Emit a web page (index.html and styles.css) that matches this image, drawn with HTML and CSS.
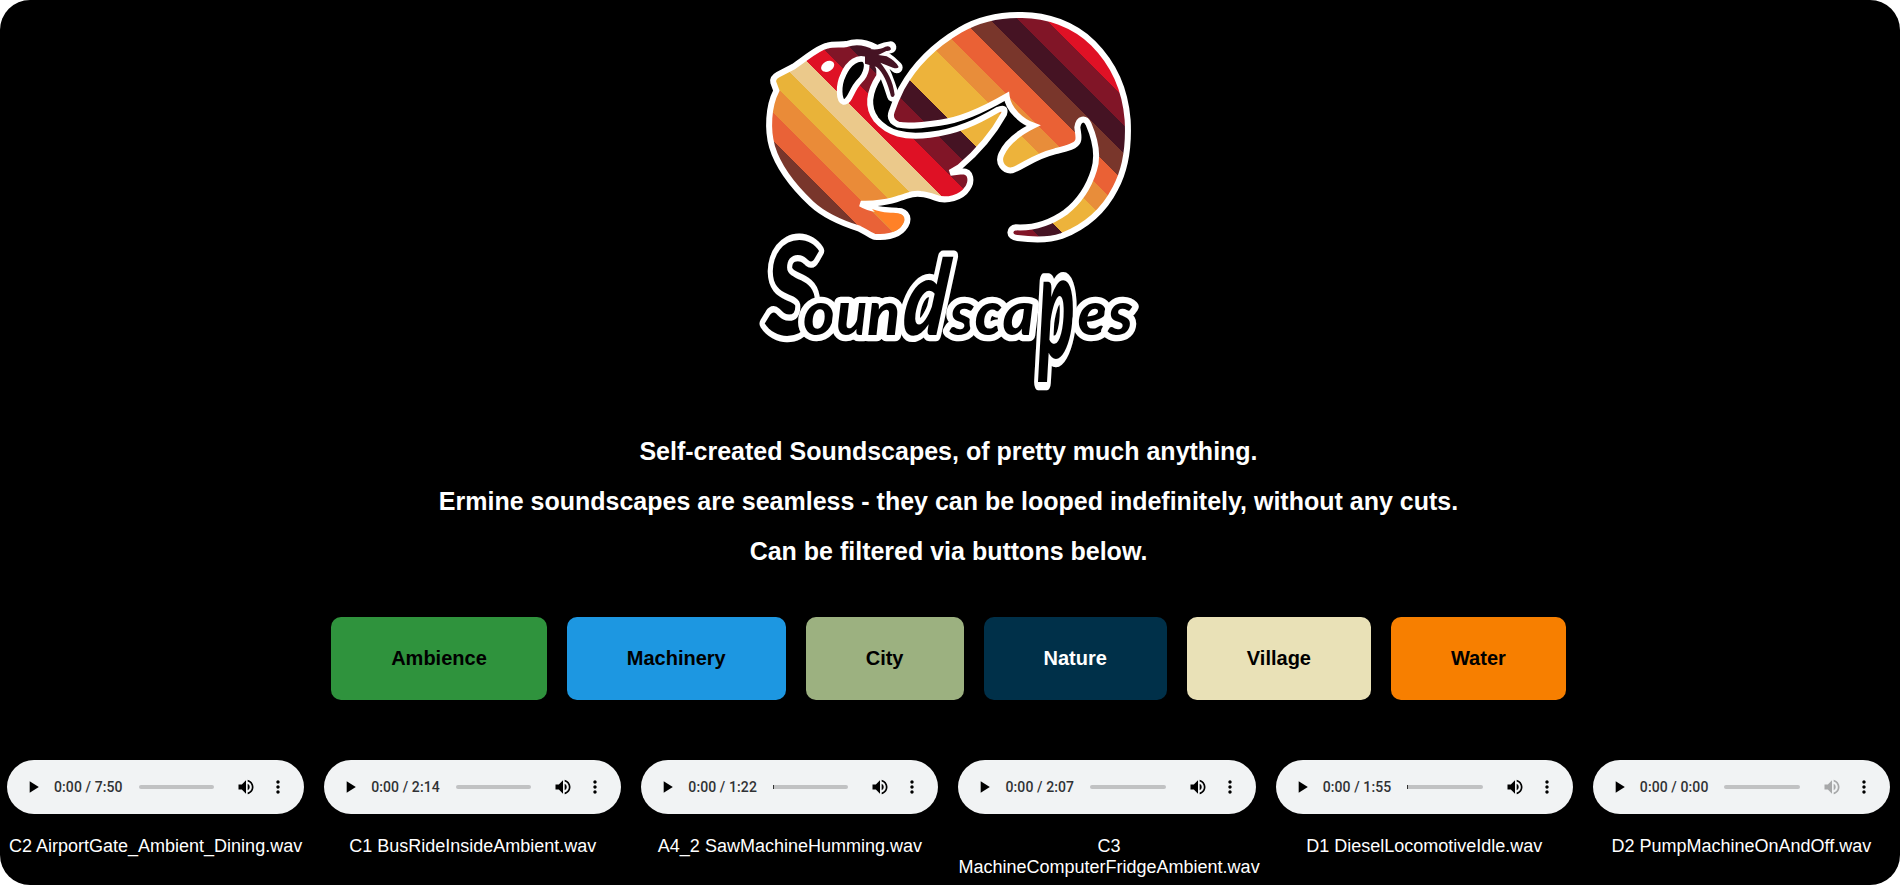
FILE: index.html
```html
<!DOCTYPE html>
<html lang="en">
<head>
<meta charset="utf-8">
<title>Ermine Soundscapes</title>
<link rel="stylesheet" href="styles.css">
</head>
<body>
<svg class="sprite" width="0" height="0" aria-hidden="true">
  <symbol id="play" viewBox="0 0 24 24"><path d="M8 5v14l11-7z"/></symbol>
  <symbol id="volume" viewBox="0 0 24 24"><path d="M3 9v6h4l5 5V4L7 9H3zm13.5 3A4.5 4.5 0 0 0 14 7.97v8.05A4.5 4.5 0 0 0 16.500 12zM14 3.230v2.060c2.890.860 5 3.540 5 6.710s-2.110 5.850-5 6.710v2.060c4.010-.91 7-4.490 7-8.770s-2.990-7.860-7-8.770z"/></symbol>
  <symbol id="more" viewBox="0 0 24 24"><path d="M12 8c1.100 0 2-.9 2-2s-.9-2-2-2-2 .9-2 2 .9 2 2 2zm0 2c-1.100 0-2 .9-2 2s.9 2 2 2 2-.9 2-2-.9-2-2-2zm0 6c-1.100 0-2 .9-2 2s.9 2 2 2 2-.9 2-2-.9-2-2-2z"/></symbol>
</svg>
<main class="page">
  <svg class="logo" viewBox="0 0 1200 1200" role="img" aria-label="Soundscapes ermine logo">
    <defs>
      <linearGradient id="stripes" gradientUnits="userSpaceOnUse" x1="-220" y1="220" x2="450" y2="-450">
        <stop offset=".0642" stop-color="#79362b"/><stop offset=".0642" stop-color="#e96237"/>
        <stop offset=".1284" stop-color="#e96237"/><stop offset=".1284" stop-color="#ea8b38"/>
        <stop offset=".1925" stop-color="#ea8b38"/><stop offset=".1925" stop-color="#e9b339"/>
        <stop offset=".256" stop-color="#e9b339"/><stop offset=".256" stop-color="#ebc98b"/>
        <stop offset=".3194" stop-color="#ebc98b"/><stop offset=".3194" stop-color="#df1125"/>
        <stop offset=".3821" stop-color="#df1125"/><stop offset=".3821" stop-color="#811527"/>
        <stop offset=".4463" stop-color="#811527"/><stop offset=".4463" stop-color="#451323"/>
        <stop offset=".5055" stop-color="#451323"/><stop offset=".5055" stop-color="#edb33b"/>
        <stop offset=".6321" stop-color="#edb33b"/><stop offset=".6321" stop-color="#e88d3a"/>
        <stop offset=".6918" stop-color="#e88d3a"/><stop offset=".6918" stop-color="#ea6135"/>
        <stop offset=".759" stop-color="#ea6135"/><stop offset=".759" stop-color="#79362b"/>
        <stop offset=".8231" stop-color="#79362b"/><stop offset=".8231" stop-color="#451323"/>
        <stop offset=".8843" stop-color="#451323"/><stop offset=".8843" stop-color="#811527"/>
        <stop offset=".9463" stop-color="#811527"/><stop offset=".9463" stop-color="#df1125"/>
      </linearGradient>
    </defs>
    <g class="outline">
      <path fill="url(#stripes)" d="M79 272L70 248Q66 234 84 224L130 200C166 176 202 143 232 137C252 131 274 136 290 132Q330 118 378 142L388 170V228C350 286 356 328 378 358C414 400 464 414 540 404C620 396 684 364 742 330Q770 318 762 342C730 400 680 458 629 501L601 518L636 514C665 514 667 545 652 566C636 592 590 606 556 593Q530 583 512 582C490 578 480 585 450 594C420 606 370 613 332 611C372 635 420 630 442 632C474 633 482 660 460 686C440 710 400 713 372 710C355 704 345 693 328 686C270 668 222 646 184 611C130 560 84 500 66 440C52 390 54 320 79 272Z"/>
      <path fill="url(#stripes)" d="M425 335C432 314 440 294 454 266C490 200 550 137 630 90C680 61 740 45 805 45C890 42 975 75 1030 130C1090 190 1126 270 1133 360C1137 435 1126 510 1096 565C1058 640 1002 682 935 708C895 722 840 719 802 714C774 711 776 684 798 682C855 685 905 666 946 637C990 603 1018 556 1032 510C1048 460 1032 410 1016 373C1006 352 986 354 982 382C984 400 988 413 984 423C978 440 948 446 915 454C850 470 820 500 786 511C762 514 742 490 754 463C770 425 810 397 850 377C815 364 775 330 770 289C720 318 635 360 570 368C520 375 475 381 445 374Q415 361 425 335Z"/>
    </g>
    <path fill="#ff8127" d="M366 627C405 642 426 636 444 640C468 644 466 668 450 684L430 695Z"/>
    <path class="ear" d="M281 306C266 302 264 256 280 224C298 183 325 173 342 178C357 188 350 223 329 243C302 270 302 305 281 306Z"/>
    <ellipse class="eye" cx="233" cy="199" rx="21" ry="15" transform="rotate(-30 233 199)"/>
    <path class="tuft-edge" d="M374 160Q390 146 421 142M374 162Q405 166 440 202M389 188Q408 220 429 287"/>
    <path fill="#451323" d="M345 144C370 151 390 149 406 140Q421 136 423 148Q420 154 409 153L385 165L410 169Q438 184 446 201Q442 208 429 203L391 188C412 214 429 242 434 284Q431 294 423 289C414 250 399 217 380 201L345 191Z"/>
    <g class="wordmark">
      <text class="cap" transform="translate(46 1004) scale(.8 1)">S</text>
      <text y="1004" x="160 259 352">oun</text>
      <text class="tall" transform="translate(452 1004) skewX(-7) scale(.75 1)">d</text>
      <text y="1004" x="600 674 758">sca</text>
      <text class="deep" transform="translate(865 1075) scale(.46 1)">p</text>
      <text y="1004" x="983 1075">es</text>
    </g>
  </svg>
  <header class="intro">
    <h2>Self-created Soundscapes, of pretty much anything.</h2>
    <h2>Ermine soundscapes are seamless - they can be looped indefinitely, without any cuts.</h2>
    <h2>Can be filtered via buttons below.</h2>
  </header>
  <nav class="filters">
    <button class="filter ambience">Ambience</button>
    <button class="filter machinery">Machinery</button>
    <button class="filter city">City</button>
    <button class="filter nature">Nature</button>
    <button class="filter village">Village</button>
    <button class="filter water">Water</button>
  </nav>
  <section class="tracks">
    <figure class="track"><div class="player"><svg class="icon"><use href="#play"/></svg><span class="time">0:00 / 7:50</span><span class="bar"></span><svg class="icon volume"><use href="#volume"/></svg><svg class="icon"><use href="#more"/></svg></div><figcaption>C2 AirportGate_Ambient_Dining.wav</figcaption></figure>
    <figure class="track"><div class="player"><svg class="icon"><use href="#play"/></svg><span class="time">0:00 / 2:14</span><span class="bar"></span><svg class="icon volume"><use href="#volume"/></svg><svg class="icon"><use href="#more"/></svg></div><figcaption>C1 BusRideInsideAmbient.wav</figcaption></figure>
    <figure class="track"><div class="player"><svg class="icon"><use href="#play"/></svg><span class="time">0:00 / 1:22</span><span class="bar started"></span><svg class="icon volume"><use href="#volume"/></svg><svg class="icon"><use href="#more"/></svg></div><figcaption>A4_2 SawMachineHumming.wav</figcaption></figure>
    <figure class="track"><div class="player"><svg class="icon"><use href="#play"/></svg><span class="time">0:00 / 2:07</span><span class="bar"></span><svg class="icon volume"><use href="#volume"/></svg><svg class="icon"><use href="#more"/></svg></div><figcaption class="wide">C3 MachineComputerFridgeAmbient.wav</figcaption></figure>
    <figure class="track"><div class="player"><svg class="icon"><use href="#play"/></svg><span class="time">0:00 / 1:55</span><span class="bar started"></span><svg class="icon volume"><use href="#volume"/></svg><svg class="icon"><use href="#more"/></svg></div><figcaption>D1 DieselLocomotiveIdle.wav</figcaption></figure>
    <figure class="track"><div class="player"><svg class="icon"><use href="#play"/></svg><span class="time">0:00 / 0:00</span><span class="bar"></span><svg class="icon volume muted"><use href="#volume"/></svg><svg class="icon"><use href="#more"/></svg></div><figcaption>D2 PumpMachineOnAndOff.wav</figcaption></figure>
  </section>
</main>
</body>
</html>
```
FILE: styles.css
```css
* { box-sizing: border-box; }
body { margin: 0; background: #fff; font-family: "Liberation Sans", Arial, sans-serif; }
.sprite { display: block; height: 0; }
.page {
  height: 885px;
  padding: 0 10px 0 7px;
  display: flex;
  flex-direction: column;
  align-items: center;
  overflow: hidden;
  border-radius: 30px;
  background: #000;
  color: #fff;
}
.logo { width: 400px; height: 400px; margin-left: 3px; flex: none; }
.outline path { stroke: #fff; stroke-width: 18; stroke-linejoin: miter; }
.ear { fill: #000; stroke: #fff; stroke-width: 17; }
.eye { fill: #fff; }
.tuft-edge { fill: none; stroke: #fff; stroke-width: 36; stroke-linecap: round; }
.wordmark {
  font-family: Lato, sans-serif;
  font-size: 180px;
  font-style: italic;
  font-weight: 900;
  fill: #000;
  stroke: #fff;
  stroke-width: 38px;
  stroke-linejoin: round;
  paint-order: stroke;
}
.cap { font-size: 390px; }
.tall { font-size: 315px; }
.deep { font-size: 440px; stroke-width: 50px; }
.intro { padding-top: 37px; text-align: center; }
.intro h2 { margin: 0 0 22px; font-size: 25px; line-height: 28px; }
.filters { display: flex; gap: 20px; margin-top: 30px; }
.filter {
  height: 83px;
  padding: 0 60px;
  border: 0;
  border-radius: 10px;
  font: bold 20px/23px "Liberation Sans", Arial, sans-serif;
  color: #000;
}
.ambience { background: #2f933d; }
.machinery { background: #1d97e1; }
.city { background: #9cb180; }
.nature { background: #003049; color: #fff; }
.village { background: #e9e1b7; }
.water { background: #f77f00; }
.tracks {
  display: grid;
  grid-template-columns: repeat(6, minmax(0, 1fr));
  gap: 20px;
  width: 100%;
  margin-top: 60px;
}
.track { margin: 0; display: flex; flex-direction: column; align-items: center; }
.player {
  width: 100%;
  height: 54px;
  padding: 0 16px;
  display: flex;
  align-items: center;
  border-radius: 27px;
  background: #f1f3f4;
}
.icon { width: 20px; height: 20px; flex: none; fill: #000; }
.time { margin-left: 11px; font: 500 14px/54px Roboto, sans-serif; letter-spacing: .1px; color: #303234; white-space: nowrap; }
.bar { flex: 1; height: 4px; margin: 0 22px 0 16px; border-radius: 2px; background: #c1c2c3; }
.started { border-left: 1px solid #333; border-radius: 0 2px 2px 0; }
.volume { margin-right: 12px; }
.muted { opacity: .3; }
figcaption { margin-top: 22px; font-size: 18px; line-height: 21px; text-align: center; }
.wide { margin-right: -4px; }
```
